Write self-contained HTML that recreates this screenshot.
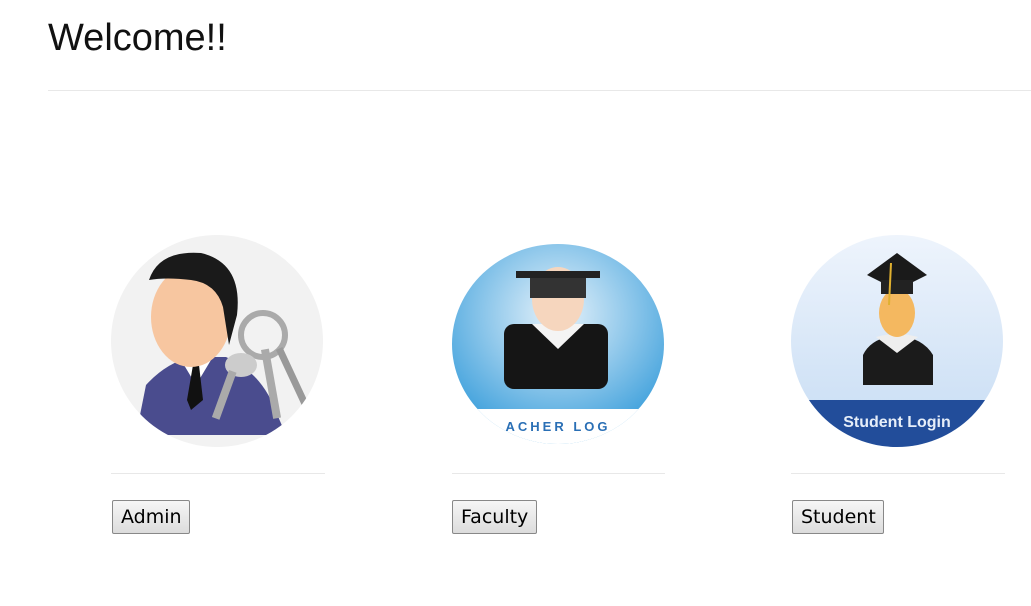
<!DOCTYPE html>
<html><head><style>
body{margin:0;width:1031px;height:606px;background:#fff;position:relative;overflow:hidden;font-family:"DejaVu Sans","Liberation Sans",sans-serif}
h1{position:absolute;left:48px;top:17px;margin:0;font-weight:normal;font-size:38px;color:#111;font-family:"Liberation Sans",sans-serif}
.hr{position:absolute;height:1px;background:#e8e8e8}
.btn{position:absolute;top:500px;height:34px;border:1px solid #888;border-radius:2px;background:linear-gradient(#f6f6f6,#dcdcdc);font-size:19px;line-height:32px;padding:0 8px;box-sizing:border-box;color:#000}
svg{position:absolute}
</style></head><body>
<h1>Welcome!!</h1>
<div class="hr" style="left:48px;top:90px;width:983px"></div>

<svg style="left:111px;top:235px" width="213" height="212" viewBox="0 0 213 212">
<defs><clipPath id="c1"><ellipse cx="106" cy="106" rx="106" ry="106"/></clipPath></defs>
<ellipse cx="106" cy="106" rx="106" ry="106" fill="#f2f2f2"/>
<g clip-path="url(#c1)">
<path d="M25 200 L35 150 Q55 128 80 122 L115 122 Q145 135 160 165 L175 200Z" fill="#4a4c8e"/>
<path d="M70 125 L85 150 L100 125Z" fill="#fff"/>
<path d="M82 130 L88 130 L92 165 L80 175 L76 165Z" fill="#111"/>
<ellipse cx="80" cy="82" rx="40" ry="50" fill="#f7c6a0"/>
<path d="M38 45 Q48 15 90 18 Q132 28 126 80 L118 110 L112 72 Q105 48 80 45 Q55 42 38 45Z" fill="#1a1a1a"/>
<circle cx="152" cy="100" r="22" fill="none" stroke="#aaa" stroke-width="6"/>
<ellipse cx="130" cy="130" rx="16" ry="12" fill="#ccc"/>
<rect x="150" y="115" width="8" height="70" fill="#aaa" transform="rotate(-10 150 115)"/>
<rect x="165" y="115" width="7" height="65" fill="#999" transform="rotate(-25 165 115)"/>
<rect x="118" y="135" width="8" height="50" fill="#aaa" transform="rotate(20 118 135)"/>
</g></svg>

<svg style="left:452px;top:244px" width="212" height="202" viewBox="0 0 212 202">
<defs><clipPath id="c2"><ellipse cx="106" cy="100" rx="106" ry="100"/></clipPath>
<radialGradient id="g2" cx="0.5" cy="0.35" r="0.6"><stop offset="0" stop-color="#e8f3fb"/><stop offset="1" stop-color="#4aa6de"/></radialGradient></defs>
<ellipse cx="106" cy="100" rx="106" ry="100" fill="url(#g2)"/>
<g clip-path="url(#c2)">
<rect x="0" y="165" width="212" height="40" fill="#fff"/>
<text x="106" y="187" text-anchor="middle" font-family="Liberation Sans" font-weight="bold" font-size="13" letter-spacing="3" fill="#2a6fb5">ACHER LOG</text>
</g>
<rect x="52" y="80" width="104" height="65" rx="10" fill="#151515"/>
<path d="M80 80 L106 105 L132 80Z" fill="#f4f4f4"/>
<ellipse cx="106" cy="55" rx="26" ry="32" fill="#f6d6be"/>
<rect x="64" y="27" width="84" height="7" fill="#222"/>
<rect x="78" y="34" width="56" height="20" fill="#333"/>
</svg>

<svg style="left:791px;top:235px" width="213" height="212" viewBox="0 0 213 212">
<defs><clipPath id="c3"><ellipse cx="106" cy="106" rx="106" ry="106"/></clipPath>
<linearGradient id="g3" x1="0" y1="0" x2="0" y2="1"><stop offset="0" stop-color="#eef4fc"/><stop offset="1" stop-color="#c6dcf4"/></linearGradient></defs>
<ellipse cx="106" cy="106" rx="106" ry="106" fill="url(#g3)"/>
<g clip-path="url(#c3)">
<rect x="0" y="165" width="213" height="50" fill="#224d9a"/>
<text x="106" y="192" text-anchor="middle" font-family="Liberation Sans" font-weight="bold" font-size="16" fill="#e6eef9">Student Login</text>
</g>
<path d="M72 150 L72 120 Q80 103 106 100 Q132 103 142 120 L142 150Z" fill="#1b1b1b"/>
<path d="M85 102 L106 118 L127 102 Q106 96 85 102Z" fill="#eee"/>
<ellipse cx="106" cy="78" rx="18" ry="24" fill="#f4b860"/>
<path d="M76 40 L106 18 L136 40 L106 55Z" fill="#1a1a1a"/>
<rect x="90" y="45" width="32" height="14" fill="#222"/>
<line x1="100" y1="28" x2="98" y2="70" stroke="#e0b030" stroke-width="2"/>
</svg>

<div class="hr" style="left:111px;top:473px;width:214px"></div>
<div class="hr" style="left:452px;top:473px;width:213px"></div>
<div class="hr" style="left:791px;top:473px;width:214px"></div>

<div class="btn" style="left:112px;width:78px">Admin</div>
<div class="btn" style="left:452px;width:85px">Faculty</div>
<div class="btn" style="left:792px;width:92px">Student</div>
</body></html>
